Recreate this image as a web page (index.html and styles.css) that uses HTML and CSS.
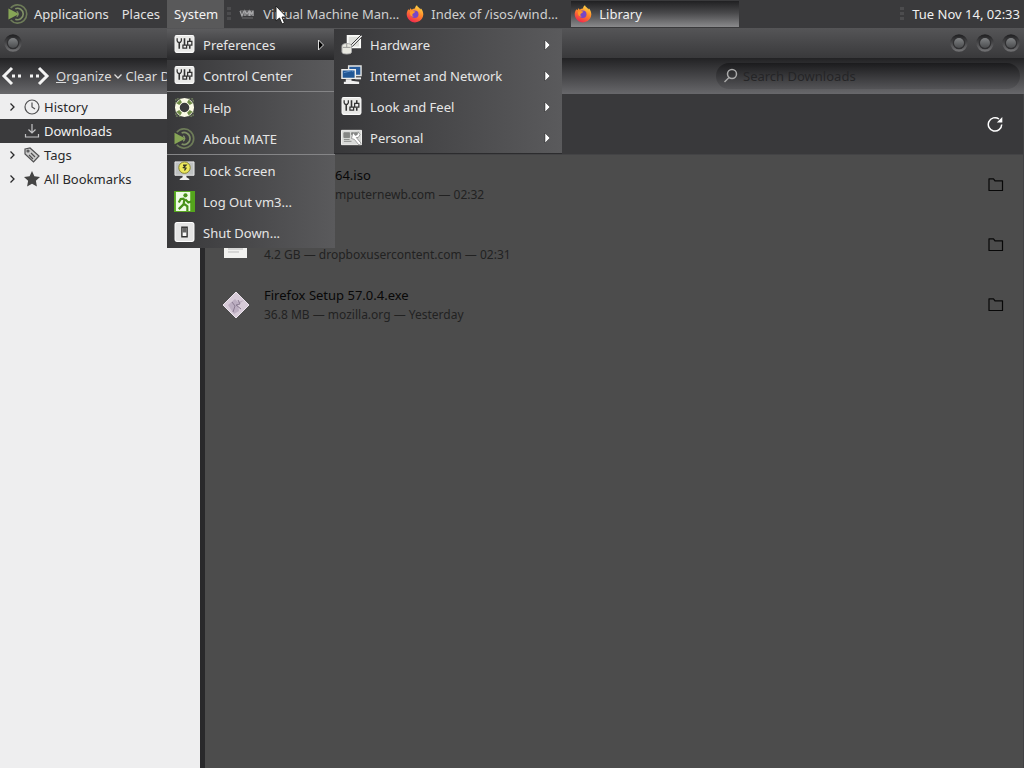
FILE: index.html
```html
<!DOCTYPE html>
<html lang="en">
<head>
<meta charset="utf-8">
<title>Library</title>
<link rel="stylesheet" href="styles.css">
</head>
<body>
<svg class="defs" aria-hidden="true">
  <defs>
    <linearGradient id="fox" x1="0.8" y1="0" x2="0.3" y2="1"><stop offset="0" stop-color="#ffe14a"/><stop offset="0.45" stop-color="#ff8a2a"/><stop offset="1" stop-color="#f0244f"/></linearGradient>
    <linearGradient id="knob" x1="0" y1="0" x2="0" y2="1"><stop offset="0" stop-color="#232325"/><stop offset="1" stop-color="#6e6e70"/></linearGradient>
    <linearGradient id="bead" x1="0" y1="0" x2="0" y2="1"><stop offset="0" stop-color="#808284"/><stop offset="1" stop-color="#4a4b4d"/></linearGradient>
    <symbol id="i-mate" viewBox="0 0 22 22">
      <path d="M3 4.500A10 10 0 1 1 3 17.500" fill="none" stroke="#6d7b58" stroke-width="1.800"/>
      <path d="M8 5.200A6.300 6.300 0 1 1 8 16.800" fill="none" stroke="#7f9065" stroke-width="1.800"/>
      <path d="M9.500 8.200A3.200 3.200 0 0 1 9.500 13.800" fill="none" stroke="#7f9065" stroke-width="1.500"/>
      <path d="M0.500 5l11.500 6-11.500 6z" fill="#87a556"/>
    </symbol>
    <symbol id="i-knob" viewBox="0 0 20 20">
      <circle cx="10" cy="10" r="7.500" fill="#303032" stroke="url(#knob)" stroke-width="2.400"/>
      <circle cx="10" cy="10" r="5" fill="url(#bead)"/>
    </symbol>
    <symbol id="i-firefox" viewBox="0 0 18 18">
      <path d="M2.300 4.200l1.200 1 .8-2 1.600 1.600C7 3.600 8.400 3.800 9 3.600 9 2 10 .8 11 .3c.4 1.800 2.400 2.400 3.600 4.200l.2-1.300c1.600 1.800 2.600 4 2.500 6.400A8.300 8.300 0 1 1 2.300 4.200z" fill="url(#fox)"/>
      <circle cx="8.800" cy="9.300" r="3.700" fill="#7746c7"/>
      <path d="M4 6.500c2-.8 4-.7 5.500.2l-2 1.500c-1.700 1-1.500 2.600.3 3.400-2.500.4-4.200-1.200-3.800-5.100z" fill="#ff9a27"/>
    </symbol>
    <symbol id="i-vmm" viewBox="0 0 18 18">
      <path d="M2 5h14v6H3z" fill="#5e5e60"/>
      <path d="M2 6l2 5 2-5M7 11V6l2 3 2-3v5M12 11V6l1.500 3L15 6v5" fill="none" stroke="#a8a8aa" stroke-width="1.100"/>
      <path d="M4 13h11" stroke="#6c6c6e"/>
    </symbol>
    <symbol id="i-sliders" viewBox="0 0 20 20">
      <rect x="1" y="1.500" width="18" height="16" rx="1.500" fill="#e9e9e7" stroke="#fbfbfb"/>
      <path d="M5 8v6M10 4v7M15 4v3M15 11v3" stroke="#333" stroke-width="1.500"/>
      <path d="M3 4v2.500l1 1.500h2l1-1.500V4M8.500 10.500h3.500v3H8.500zM13 7h4v3.500h-4z" fill="#eee" stroke="#333" stroke-width="1.200"/>
    </symbol>
    <symbol id="i-help" viewBox="0 0 22 22">
      <path d="M2 7V2h5M15 2h5v5M20 15v5h-5M7 20H2v-5" fill="none" stroke="#879d6c" stroke-width="1" stroke-dasharray="2 1"/>
      <circle cx="11" cy="11" r="7.500" fill="none" stroke="#fafae6" stroke-width="5"/>
      <path d="M2.500 6.500l4-4 1.800 3-2.800 2.800zM19.500 6.500l-4-4-1.800 3 2.800 2.800zM2.500 15.500l4 4 1.800-3-2.800-2.800zM19.500 15.500l-4 4-1.800-3 2.800-2.800z" fill="#708c48"/>
    </symbol>
    <symbol id="i-lock" viewBox="0 0 22 22">
      <path d="M1 2h20v14H1z" fill="#bfc2c2" stroke="#e9e9e9"/>
      <path d="M9 16h4v2l3 2v1H6v-1l3-2z" fill="#eeeeec"/>
      <circle cx="11" cy="8" r="6" fill="#eee95c" stroke="#817f2d"/>
      <path d="M9.500 5.500h3L10 8l2.500.5L11 11" fill="none" stroke="#343426" stroke-width="1.400"/>
    </symbol>
    <symbol id="i-exit" viewBox="0 0 22 22">
      <path d="M0 0h22v22H0z" fill="#54a51c"/>
      <path d="M2 1h15v20H2z" fill="#effce5"/>
      <circle cx="12" cy="4.500" r="2.200" fill="#48921a"/>
      <path d="M11 8L7 8.500 5 12M11 8l-1 6-5 5M10 13l4 3v5M12 9l3 3 3-1" fill="none" stroke="#48921a" stroke-width="2.300"/>
    </symbol>
    <symbol id="i-switch" viewBox="0 0 20 20">
      <rect x="1" y="0.500" width="18" height="18" rx="2" fill="#e4e4e4" stroke="#fff"/>
      <path d="M7.500 5h5v9h-5z" fill="#f8f8f8" stroke="#303030" stroke-width="1.300"/>
      <path d="M8 5.500h4V10H8z" fill="#666"/>
    </symbol>
    <symbol id="i-hardware" viewBox="0 0 22 22">
      <path d="M7 2h13v12H7z" fill="#dfe0dc" stroke="#fbfbf9" stroke-width="2"/>
      <path d="M21 1L11 11l-2 3 3-1L22 3" fill="#eee" stroke="#333" stroke-width="1"/>
      <path d="M1 13q0-3 5-3t5 3v6q0 2-5 2t-5-2z" fill="#e8e8e0" stroke="#aaa"/>
      <path d="M2 14h8M6 10v4" stroke="#969694"/>
    </symbol>
    <symbol id="i-network" viewBox="0 0 22 22">
      <path d="M8 1h13v10H8z" fill="#275c9d" stroke="#e3e4e2" stroke-width="1.500"/>
      <path d="M15 13h6v2h-6z" fill="#eee"/>
      <path d="M1 5h14v9H1z" fill="#215795" stroke="#eeeeec" stroke-width="1.500"/>
      <path d="M3 8l8-2 2 1" stroke="#5c8ec7" fill="none"/>
      <path d="M5 15h6v1.500l8 1v2.500H3v-2.500h2z" fill="#eee"/>
    </symbol>
    <symbol id="i-personal" viewBox="0 0 22 20">
      <path d="M.5 2.500h21v15H.5z" fill="#dadbd9" stroke="#f4f4f2"/>
      <path d="M3 5h6v5H3zM11 5h2v2h-2zM14 5h3v2h-3zM3 12h6M3 14h8" fill="#858785" stroke="#858785"/>
      <path d="M12 7l1-2 2 3 2-1 1-3 2 3-2 3h-2l5 6-2 2-5-6-3-1z" fill="#fff" stroke="#777" stroke-width=".7"/>
    </symbol>
    <symbol id="i-folder" viewBox="0 0 16 16"><path d="M1 13.500V1.800h4.500l1.500 2h7.500v9.700z" fill="none" stroke="currentColor" stroke-width="1.200" stroke-linejoin="round"/></symbol>
    <symbol id="i-twist" viewBox="0 0 8 10"><path d="M2.500 1.500L6 5 2.500 8.500" fill="none" stroke="currentColor" stroke-width="1.300"/></symbol>
  </defs>
</svg>

<header class="panel">
  <nav class="menubar" aria-label="Desktop">
    <button class="menubar-item with-logo"><svg class="logo"><use href="#i-mate"/></svg>Applications</button>
    <button class="menubar-item">Places</button>
    <div class="menu-anchor">
      <button class="menubar-item open">System</button>
      <ul class="menu main-menu">
        <li>
          <button class="menu-item selected"><svg class="menu-icon"><use href="#i-sliders"/></svg><span>Preferences</span><svg class="arrow outline" viewBox="0 0 8 12"><path d="M1.500 1l5 5-5 5z"/></svg></button>
          <ul class="menu submenu">
            <li><button class="menu-item"><svg class="menu-icon"><use href="#i-hardware"/></svg><span>Hardware</span><svg class="arrow" viewBox="0 0 8 12"><path d="M1 1l5 5-5 5z"/></svg></button></li>
            <li><button class="menu-item"><svg class="menu-icon"><use href="#i-network"/></svg><span>Internet and Network</span><svg class="arrow" viewBox="0 0 8 12"><path d="M1 1l5 5-5 5z"/></svg></button></li>
            <li><button class="menu-item"><svg class="menu-icon"><use href="#i-sliders"/></svg><span>Look and Feel</span><svg class="arrow" viewBox="0 0 8 12"><path d="M1 1l5 5-5 5z"/></svg></button></li>
            <li><button class="menu-item"><svg class="menu-icon"><use href="#i-personal"/></svg><span>Personal</span><svg class="arrow" viewBox="0 0 8 12"><path d="M1 1l5 5-5 5z"/></svg></button></li>
          </ul>
        </li>
        <li><button class="menu-item"><svg class="menu-icon"><use href="#i-sliders"/></svg><span>Control Center</span></button></li>
        <li class="group"><button class="menu-item"><svg class="menu-icon"><use href="#i-help"/></svg><span>Help</span></button></li>
        <li><button class="menu-item"><svg class="menu-icon"><use href="#i-mate"/></svg><span>About MATE</span></button></li>
        <li class="group"><button class="menu-item"><svg class="menu-icon"><use href="#i-lock"/></svg><span>Lock Screen</span></button></li>
        <li><button class="menu-item"><svg class="menu-icon"><use href="#i-exit"/></svg><span>Log Out vm3...</span></button></li>
        <li><button class="menu-item"><svg class="menu-icon"><use href="#i-switch"/></svg><span>Shut Down...</span></button></li>
      </ul>
    </div>
  </nav>
  <span class="grip"></span>
  <div class="tasks">
    <button class="task"><svg><use href="#i-vmm"/></svg>Virtual Machine Man…</button>
    <button class="task"><svg><use href="#i-firefox"/></svg>Index of /isos/wind…</button>
    <button class="task current"><svg><use href="#i-firefox"/></svg>Library</button>
  </div>
  <span class="grip"></span>
  <time class="clock">Tue Nov 14, 02:33</time>
</header>

<div class="titlebar">
  <button class="knob" aria-label="Window menu"><svg><use href="#i-knob"/></svg></button>
  <div class="window-buttons">
    <button class="knob" aria-label="Minimize"><svg><use href="#i-knob"/></svg></button>
    <button class="knob" aria-label="Maximize"><svg><use href="#i-knob"/></svg></button>
    <button class="knob" aria-label="Close"><svg><use href="#i-knob"/></svg></button>
  </div>
</div>

<div class="toolbar">
  <div class="nav">
    <button aria-label="Back"><svg viewBox="0 0 22 20"><path d="M11 2L3 10l8 8"/><path class="dots" d="M11 10h3M17 10h3"/></svg></button>
    <button aria-label="Forward"><svg viewBox="0 0 22 20"><path d="M11 2l8 8-8 8"/><path class="dots" d="M2 10h3M8 10h3"/></svg></button>
  </div>
  <button class="tool"><span><u>O</u>rganize</span><svg viewBox="0 0 8 8"><path d="M0.500 2.500L4 6l3.500-3.500"/></svg></button>
  <button class="tool" aria-label="Clear Downloads">Clear D</button>
  <label class="search"><svg viewBox="0 0 16 16"><circle cx="9" cy="6" r="4.500"/><path d="M6 9.500L1.500 14"/></svg><input type="search" placeholder="Search Downloads" aria-label="Search Downloads"></label>
</div>

<main class="library">
  <nav class="sidebar" aria-label="Library">
    <a class="place" href="#history"><svg class="twist"><use href="#i-twist"/></svg><svg class="place-icon" viewBox="0 0 16 16"><circle cx="8" cy="8" r="7"/><path d="M8 3.500V8l3 2"/></svg>History</a>
    <a class="place active" href="#downloads"><span class="twist"></span><svg class="place-icon" viewBox="0 0 16 16"><path d="M8 1v9M4.500 6.500L8 10l3.500-3.500M1.500 11v3h13v-3"/></svg>Downloads</a>
    <a class="place" href="#tags"><svg class="twist"><use href="#i-twist"/></svg><svg class="place-icon" viewBox="0 0 16 16"><path d="M1 2l5-1 9 8-5.500 6L1 7z" fill="#ccc"/><path d="M7 6l4 4M5 8l4 4"/><circle cx="4" cy="4" r="1"/></svg>Tags</a>
    <a class="place" href="#bookmarks"><svg class="twist"><use href="#i-twist"/></svg><svg class="place-icon star" viewBox="0 0 16 16"><path d="M8 0l2.400 5.200 5.600.7-4.100 3.900 1 5.700L8 12.700l-4.900 2.800 1-5.700L0 5.900l5.600-.7z"/></svg>All Bookmarks</a>
  </nav>
  <section class="downloads">
    <div class="downloads-head">
      <button class="row-button light" aria-label="Refresh"><svg viewBox="0 0 16 16"><path d="M14.700 8.500A6.700 6.700 0 1 1 12 3" fill="none" stroke="currentColor" stroke-width="1.500"/><path d="M15.300 1v5.500H9.800z" fill="currentColor"/></svg></button>
    </div>
    <div class="download">
      <span class="file-icon"></span>
      <div class="file covered"><div class="name">64.iso</div><div class="detail">mputernewb.com — 02:32</div></div>
      <button class="row-button" aria-label="Show in folder"><svg><use href="#i-folder"/></svg></button>
    </div>
    <div class="download">
      <svg class="file-icon" viewBox="0 0 32 32"><path d="M4 2h23v27H4z" fill="#f2f2f0"/><path d="M8 20h15M8 23h11" stroke="#bbb"/></svg>
      <div class="file"><div class="name">&nbsp;</div><div class="detail">4.2 GB — dropboxusercontent.com — 02:31</div></div>
      <button class="row-button" aria-label="Show in folder"><svg><use href="#i-folder"/></svg></button>
    </div>
    <div class="download">
      <svg class="file-icon" viewBox="0 0 32 32"><path d="M16 3l13 13-13 13L3 16z" fill="#d7cbd8" stroke="#ece4ed"/><path d="M8 16l7-6 3 3 6-2-6 5 1 6-5 3z" fill="#bcaec1"/><path d="M12 13l3 4-2 6M18 11l2 4-4 1 5 4" fill="none" stroke="#8b7c92"/></svg>
      <div class="file"><div class="name">Firefox Setup 57.0.4.exe</div><div class="detail">36.8 MB — mozilla.org — Yesterday</div></div>
      <button class="row-button" aria-label="Show in folder"><svg><use href="#i-folder"/></svg></button>
    </div>
  </section>
</main>
<svg class="pointer" viewBox="0 0 12 20" aria-hidden="true"><path d="M1 1v15l3.500-3 2.500 6 2.500-1L7 12h4.500z" fill="#fff" stroke="#222"/></svg>
</body>
</html>
```

FILE: styles.css
```css
* { box-sizing: border-box; }
body {
  margin: 0;
  min-height: 100vh;
  display: flex;
  flex-direction: column;
  position: relative;
  background: #4c4c4c;
  color: #f0f0f0;
  font: 13px/20px "Noto Sans", sans-serif;
}
button, input { font: inherit; color: inherit; background: none; border: 0; padding: 0; margin: 0; }
button { text-align: left; white-space: nowrap; }
svg { display: block; flex: none; }
ul { list-style: none; margin: 0; padding: 0; }
.defs { position: absolute; width: 0; height: 0; }

.panel { display: flex; align-items: stretch; height: 28px; background: #3a3a3c; }
.menubar { display: flex; }
.menubar-item { display: flex; align-items: center; height: 28px; padding: 0 7px; color: #e2e2e2; }
.with-logo { gap: 6px; padding-right: 6px; padding-left: 8px; }
.logo { width: 20px; height: 20px; }
.menubar-item.open { padding: 0 6px 0 7px; background: #59595a; color: #f4f4f4; }
.menu-anchor { position: relative; }
.menu { position: absolute; z-index: 2; background: linear-gradient(to right, #38383a, #5a5a5c); }
.main-menu { top: 29px; left: 0; width: 168px; }
.main-menu > li { position: relative; }
.submenu { top: 0; left: calc(100% - 1px); width: 228px; box-shadow: 0 1px #2c2c2e; }
.group { border-top: 1px solid #858587; }
.menu-item { display: flex; align-items: center; gap: 8px; width: 100%; height: 31px; padding: 0 10px 0 7px; color: #e6e6e6; }
.menu-item span { flex: 1; }
.menu-item.selected { background: linear-gradient(#5c5c5e, #28282a); }
.menu-icon { width: 21px; height: 21px; }
.arrow { width: 8px; height: 12px; fill: #fff; stroke: #222; stroke-width: 0.5; }
.arrow.outline { fill: #000; stroke: #ddd; stroke-width: 1; }
.grip { width: 4px; margin: 7px 4px 7px 3px; background: repeating-linear-gradient(#4c4c4e 0 3px, #3a3a3c 3px 5px); }
.tasks { flex: 1; display: flex; }
.task { display: flex; align-items: center; gap: 7px; width: 168px; padding: 0 3px; color: #d0d0d0; overflow: hidden; }
.task svg { width: 18px; height: 18px; }
.task.current { margin: 1px 0; background: linear-gradient(#202022, #48484a 45%, #8a8a8c); color: #f0f0f0; }
.clock { padding: 4px; white-space: nowrap; }

.titlebar { display: flex; align-items: center; justify-content: space-between; height: 30px; padding: 0 3px; background: linear-gradient(#555557, #39393b); }
.window-buttons { display: flex; gap: 6px; }
.knob svg { width: 20px; height: 20px; }

.toolbar { display: flex; align-items: center; height: 36px; padding: 0 4px 0 1px; background: linear-gradient(#222224, #68686b); }
.nav { display: flex; gap: 5px; padding-right: 6px; }
.nav svg { width: 22px; height: 20px; fill: none; stroke: #f4f4f4; stroke-width: 3; }
.nav .dots { stroke-width: 3; }
.tool { display: flex; align-items: center; gap: 2px; margin-right: 4px; color: #dcdcdc; }
.tool svg { width: 8px; height: 8px; fill: none; stroke: #dcdcdc; stroke-width: 1.3; }
.search { display: flex; align-items: center; gap: 4px; width: 304px; height: 26px; margin-left: auto; padding: 0 7px; border-radius: 13px; background: linear-gradient(#1b1b1d, #545457); }
.search svg { width: 16px; height: 16px; fill: none; stroke: #aaa; stroke-width: 1.5; }
.search input { flex: 1; min-width: 0; outline: 0; }
.search input::placeholder { color: #252527; opacity: 1; }

.library { flex: 1; display: flex; }
.sidebar { width: 205px; border-right: 5px solid #29292b; background: #eeeeef; padding-top: 1px; }
.place { display: flex; align-items: center; height: 24px; padding-left: 8px; color: #29292b; text-decoration: none; }
.place.active { background: #3a3a3c; color: #f2f2f2; }
.twist { width: 8px; height: 10px; margin-right: 8px; }
.place-icon { width: 16px; height: 16px; margin-right: 4px; fill: none; stroke: #505052; stroke-width: 1.2; }
.active .place-icon { stroke: #c4c4c6; }
.place-icon.star { fill: #444; stroke: none; }
.downloads { flex: 1; border-right: 1px solid #414143; }
.downloads-head { display: flex; align-items: center; justify-content: flex-end; height: 61px; padding-right: 20px; background: #39393b; border-bottom: 1px solid #434345; }
.download { display: flex; align-items: center; height: 60px; padding: 0 19px 0 15px; }
.file-icon { width: 32px; height: 32px; margin-right: 12px; }
.file { flex: 1; }
.covered { padding-left: 71px; }
.name { color: #080808; }
.detail { font-size: 12px; color: #222; }
.row-button { color: #080808; }
.row-button.light { color: #fff; }
.row-button svg { width: 16px; height: 16px; }
.pointer { position: absolute; z-index: 3; left: 275px; top: 5px; width: 12px; height: 20px; }
```
